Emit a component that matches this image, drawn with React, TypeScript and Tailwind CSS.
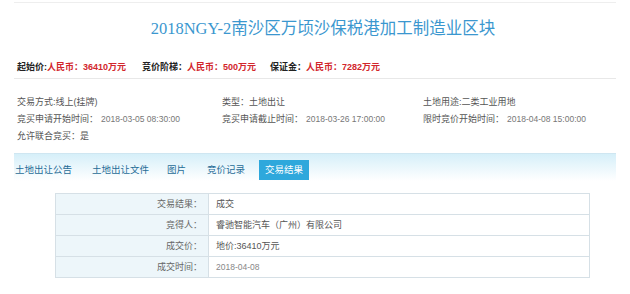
const cjk = "font-['Liberation_Sans','Noto_Sans_CJK_SC',sans-serif]"

const info = [
  ['交易方式:线上(挂牌)', '类型：土地出让', '土地用途:二类工业用地'],
  ['竞买申请开始时间：', '竞买申请截止时间：', '限时竞价开始时间：'],
]
const times = ['2018-03-05 08:30:00', '2018-03-26 17:00:00', '2018-04-08 15:00:00']

const tabs = [
  { label: '土地出让公告', w: 'w-[77px]' },
  { label: '土地出让文件', w: 'w-[75px]' },
  { label: '图片', w: 'w-[40px]' },
  { label: '竞价记录', w: 'w-[51px]' },
]

const rows = [
  ['交易结果：', '成交'],
  ['竞得人：', '睿驰智能汽车（广州）有限公司'],
  ['成交价：', '地价:36410万元'],
  ['成交时间：', '2018-04-08'],
]

export default function App() {
  return (
    <div className={`w-[630px] h-[294px] overflow-hidden bg-white ${cjk}`}>
      <div className="mx-[14px] mt-[2px] border-t border-[#eeeeee]" />
      <div className="mx-[14px] h-[53px] flex items-center justify-center pl-[16px]">
        <h1 className="font-['Liberation_Serif','Noto_Sans_CJK_SC',serif] text-[16.5px] text-[#3b97cf] whitespace-nowrap">
          2018NGY-2南沙区万顷沙保税港加工制造业区块
        </h1>
      </div>

      <div className="mx-[14px] mt-[4px] h-[16px] pl-[3px] flex items-center text-[9px] font-bold whitespace-nowrap">
        <div className="w-[125px] shrink-0">
          <span className="text-[#222]">起始价:</span>
          <span className="text-[#d2262c]">人民币：36410万元</span>
        </div>
        <div className="w-[128px] shrink-0">
          <span className="text-[#222]">竞价阶梯：</span>
          <span className="text-[#d2262c]">人民币：500万元</span>
        </div>
        <div>
          <span className="text-[#222]">保证金：</span>
          <span className="text-[#d2262c]">人民币：7282万元</span>
        </div>
      </div>
      <div className="mx-[14px] mt-[2px] border-t border-[#e8e8e8]" />

      <div className="mx-[14px] pt-[15px] pl-[3px] text-[9px] text-[#555]">
        <div className="grid grid-cols-[205px_201px_1fr] h-[17px] items-center">
          {info[0].map((t) => (
            <div key={t}>{t}</div>
          ))}
        </div>
        <div className="grid grid-cols-[205px_201px_1fr] h-[17px] items-center">
          {info[1].map((t, i) => (
            <div key={t} className="whitespace-nowrap">
              {t}
              <span className="ml-[3px] text-[8.5px] text-[#777]">{times[i]}</span>
            </div>
          ))}
        </div>
        <div className="h-[17px] flex items-center">允许联合竞买：是</div>
      </div>

      <div className="mx-[14px] mt-[8px] border-t border-[#cfe6f1] h-[28px] bg-gradient-to-b from-[#d6eff9] to-white">
        <div className="flex items-center pt-[6px] text-[9.5px] text-[#1f6c97]">
          <div className="flex">
            {tabs.map((t) => (
              <div key={t.label} className={`${t.w} shrink-0 pl-[1px] h-[20px] leading-[20px]`}>
                {t.label}
              </div>
            ))}
          </div>
          <div className="ml-[2px] w-[50px] h-[20px] leading-[20px] text-center bg-[#2ea8dc] text-white">
            交易结果
          </div>
        </div>
      </div>

      <div className="ml-[55px] mt-[12px] w-[535px] border-t border-l border-[#d6e0e6] text-[9px]">
        {rows.map(([k, v]) => (
          <div key={k} className="flex h-[21px] border-b border-[#d6e0e6]">
            <div className="w-[153px] shrink-0 bg-[#edf6fa] border-r border-[#d6e0e6] text-right pr-[6px] leading-[20px] text-[#666]">
              {k}
            </div>
            <div className="flex-1 pl-[7px] leading-[20px] text-[#555] border-r border-[#d6e0e6]">
              {v.startsWith('2018') ? <span className="text-[8.5px] text-[#888]">{v}</span> : v}
            </div>
          </div>
        ))}
      </div>
    </div>
  )
}
